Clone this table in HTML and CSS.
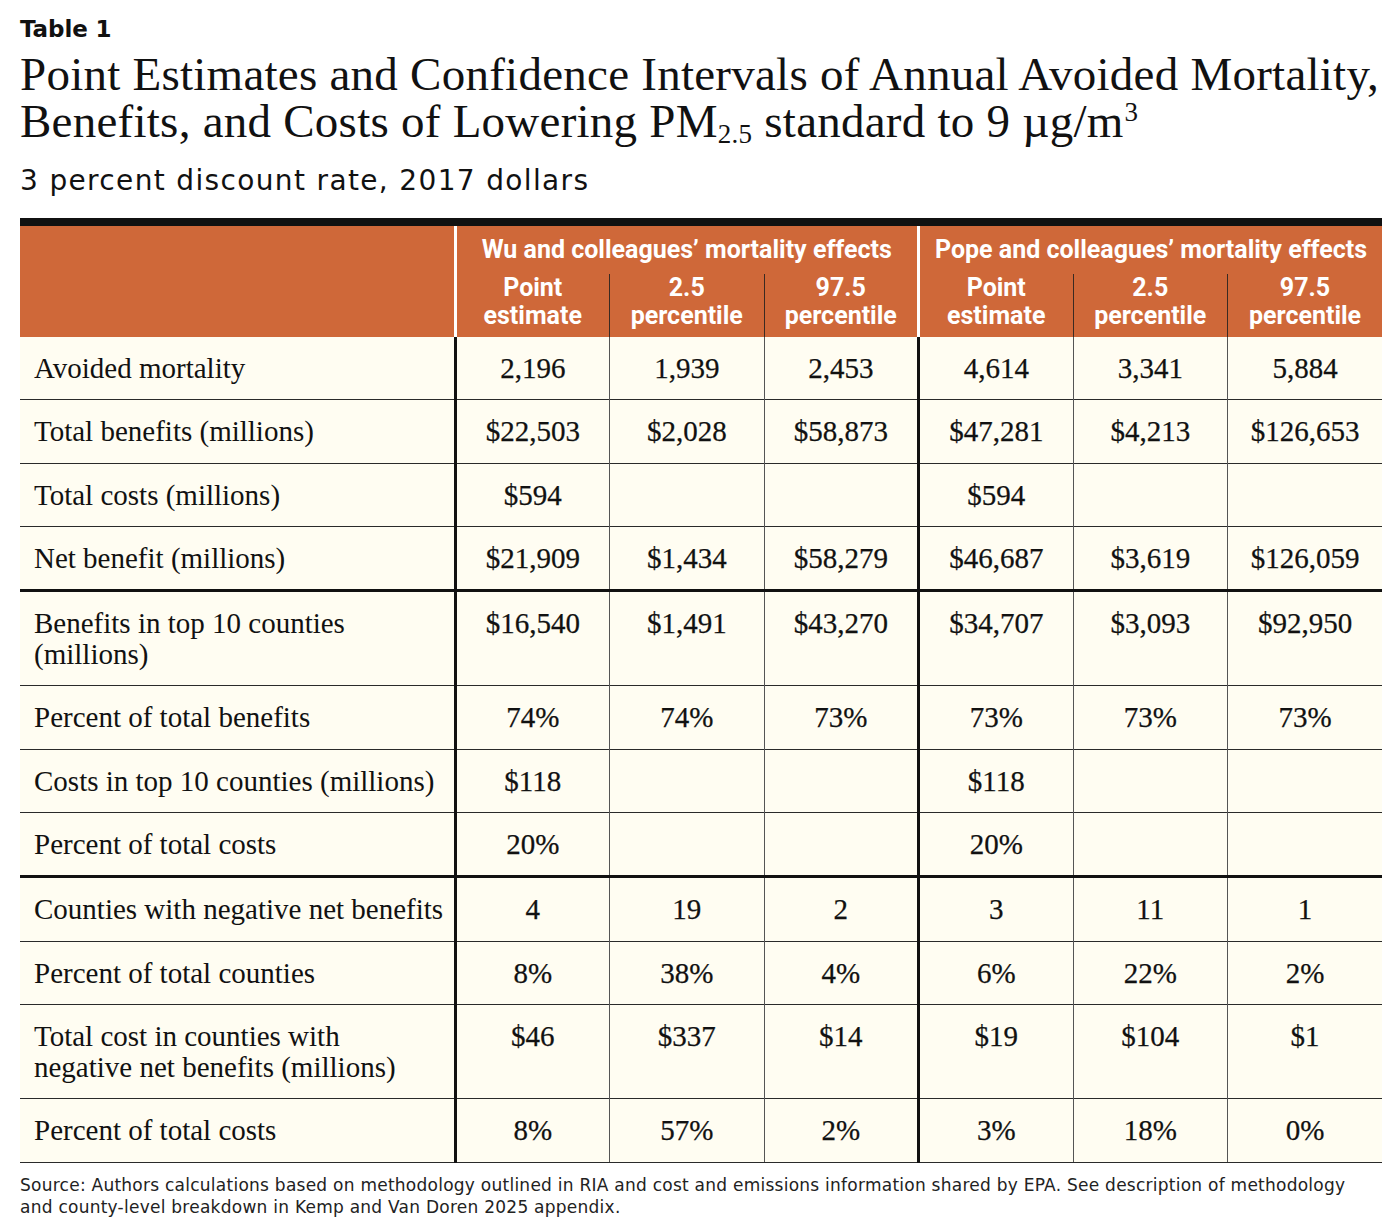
FILE: index.html
```html
<!DOCTYPE html>
<html lang="en">
<head>
<meta charset="utf-8">
<title>Table 1</title>
<link rel="stylesheet" href="styles.css">
</head>
<body>
<div class="page">
  <div class="kicker">Table 1</div>
  <h1 class="title">Point Estimates and Confidence Intervals of Annual Avoided Mortality, Benefits, and Costs of Lowering PM<sub>2.5</sub> standard to 9 µg/m<sup>3</sup></h1>
  <div class="subtitle">3 percent discount rate, 2017 dollars</div>
  <table class="data">
    <colgroup>
      <col class="c-label">
      <col class="c-num"><col class="c-num"><col class="c-num">
      <col class="c-num"><col class="c-num"><col class="c-num">
    </colgroup>
    <thead>
      <tr class="h1">
        <th class="corner" rowspan="2"></th>
        <th class="group" colspan="3">Wu and colleagues’ mortality effects</th>
        <th class="group" colspan="3">Pope and colleagues’ mortality effects</th>
      </tr>
      <tr class="h2">
        <th class="sub first">Point<br>estimate</th>
        <th class="sub">2.5<br>percentile</th>
        <th class="sub endgrp">97.5<br>percentile</th>
        <th class="sub first">Point<br>estimate</th>
        <th class="sub">2.5<br>percentile</th>
        <th class="sub">97.5<br>percentile</th>
      </tr>
    </thead>
    <tbody>
      <tr><td class="lbl">Avoided mortality</td><td>2,196</td><td>1,939</td><td class="endgrp">2,453</td><td>4,614</td><td>3,341</td><td>5,884</td></tr>
      <tr><td class="lbl">Total benefits (millions)</td><td>$22,503</td><td>$2,028</td><td class="endgrp">$58,873</td><td>$47,281</td><td>$4,213</td><td>$126,653</td></tr>
      <tr><td class="lbl">Total costs (millions)</td><td>$594</td><td></td><td class="endgrp"></td><td>$594</td><td></td><td></td></tr>
      <tr class="sect"><td class="lbl">Net benefit (millions)</td><td>$21,909</td><td>$1,434</td><td class="endgrp">$58,279</td><td>$46,687</td><td>$3,619</td><td>$126,059</td></tr>
      <tr><td class="lbl">Benefits in top 10 counties<br>(millions)</td><td>$16,540</td><td>$1,491</td><td class="endgrp">$43,270</td><td>$34,707</td><td>$3,093</td><td>$92,950</td></tr>
      <tr><td class="lbl">Percent of total benefits</td><td>74%</td><td>74%</td><td class="endgrp">73%</td><td>73%</td><td>73%</td><td>73%</td></tr>
      <tr><td class="lbl">Costs in top 10 counties (millions)</td><td>$118</td><td></td><td class="endgrp"></td><td>$118</td><td></td><td></td></tr>
      <tr class="sect"><td class="lbl">Percent of total costs</td><td>20%</td><td></td><td class="endgrp"></td><td>20%</td><td></td><td></td></tr>
      <tr><td class="lbl">Counties with negative net benefits</td><td>4</td><td>19</td><td class="endgrp">2</td><td>3</td><td>11</td><td>1</td></tr>
      <tr><td class="lbl">Percent of total counties</td><td>8%</td><td>38%</td><td class="endgrp">4%</td><td>6%</td><td>22%</td><td>2%</td></tr>
      <tr><td class="lbl">Total cost in counties with<br>negative net benefits (millions)</td><td>$46</td><td>$337</td><td class="endgrp">$14</td><td>$19</td><td>$104</td><td>$1</td></tr>
      <tr class="last"><td class="lbl">Percent of total costs</td><td>8%</td><td>57%</td><td class="endgrp">2%</td><td>3%</td><td>18%</td><td>0%</td></tr>
    </tbody>
  </table>
  <p class="source">Source: Authors calculations based on methodology outlined in RIA and cost and emissions information shared by EPA. See description of methodology<br>and county-level breakdown in Kemp and Van Doren 2025 appendix.</p>
</div>
</body>
</html>
```

FILE: styles.css
```css
html, body {
  margin: 0;
  padding: 0;
  background: #ffffff;
}

.page {
  padding: 15px 18px 0 20px;
  color: #111;
}

.kicker {
  font-family: "DejaVu Sans", "Liberation Sans", sans-serif;
  font-weight: 700;
  font-size: 23px;
  line-height: 28px;
  letter-spacing: -0.1px;
}

.title {
  margin: 8px 0 0 0;
  font-family: "Liberation Serif", serif;
  font-weight: 400;
  font-size: 47px;
  line-height: 47px;
  letter-spacing: 0.25px;
  color: #111;
}

.title sub {
  font-size: 27px;
  vertical-align: baseline;
  position: relative;
  top: 6px;
  line-height: 0;
}

.title sup {
  font-size: 27px;
  line-height: 0;
  vertical-align: baseline;
  position: relative;
  top: -16px;
  margin-left: 1px;
}

.subtitle {
  margin-top: 18px;
  font-family: "DejaVu Sans", "Liberation Sans", sans-serif;
  font-size: 28px;
  line-height: 36px;
  letter-spacing: 1.35px;
  color: #111;
}

.data {
  margin-top: 19px;
  width: 1362px;
  table-layout: fixed;
  border-collapse: collapse;
  border-top: 8px solid #111;
}

.c-label { width: 435px; }
.c-num { width: 154.5px; }

.data thead th {
  background: #cf6839;
  color: #ffffff;
  font-family: "Roboto", "Liberation Sans", sans-serif;
  font-weight: 700;
  font-size: 25px;
  letter-spacing: 0;
  padding: 0;
  white-space: nowrap;
}

.data .corner {
  border-right: 3px solid #ffffff;
}

.data .h1 th.group {
  height: 48px;
  vertical-align: middle;
  line-height: 30px;
}

.data .h1 th.group + th.group {
  border-left: 3px solid #ffffff;
}

.data .h2 th.sub {
  height: 63px;
  line-height: 28px;
  vertical-align: top;
  padding: 0;
  border-left: 1.5px solid #3a2a22;
}

.data .h2 th.sub.first {
  border-left: 3px solid #ffffff;
}

.data tbody td {
  background: #fffdf2;
  font-family: "Liberation Serif", serif;
  font-size: 29px;
  line-height: 31px;
  padding: 16px 0 15.3px 0;
  text-align: center;
  vertical-align: top;
  border-top: 1.5px solid #2a2a2a;
  border-left: 1.5px solid #555;
  color: #111;
  -webkit-text-stroke: 0.25px #111;
}

.data tbody tr:first-child td {
  border-top: 0;
}

.data tbody td.lbl {
  text-align: left;
  padding-left: 14px;
  border-left: 0;
  border-right: 3px solid #111;
  -webkit-text-stroke: 0;
}

.data tbody td.endgrp {
  border-right: 3px solid #111;
}

.data tbody tr.sect td {
  border-bottom: 3px solid #111;
}

.data tbody tr.last td {
  border-bottom: 1.5px solid #2a2a2a;
}

.source {
  margin: 11px 0 0 0;
  font-family: "DejaVu Sans", "Liberation Sans", sans-serif;
  font-size: 17px;
  line-height: 22px;
  letter-spacing: 0.25px;
  color: #222;
  white-space: nowrap;
}
```
